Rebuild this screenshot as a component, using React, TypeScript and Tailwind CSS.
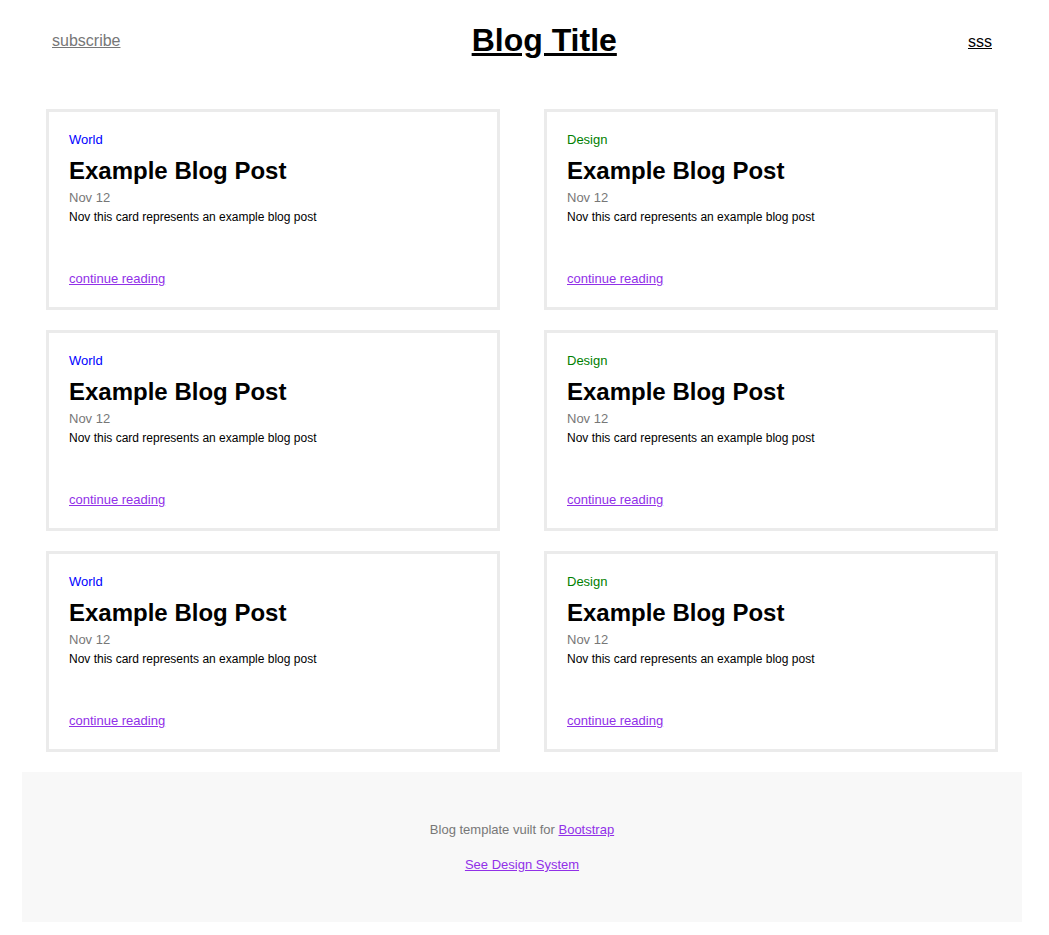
const posts = [
  { tag: 'World', tagColor: 'text-[#0000ff]' },
  { tag: 'Design', tagColor: 'text-[#008000]' },
  { tag: 'World', tagColor: 'text-[#0000ff]' },
  { tag: 'Design', tagColor: 'text-[#008000]' },
  { tag: 'World', tagColor: 'text-[#0000ff]' },
  { tag: 'Design', tagColor: 'text-[#008000]' },
]

function PostCard({ tag, tagColor }: { tag: string; tagColor: string }) {
  return (
    <div className="flex h-[201px] flex-col border-[3px] border-[#ebebeb] bg-white px-5 pb-[21px] pt-5">
      <p className={`text-[13px] leading-[15px] ${tagColor}`}>{tag}</p>
      <h2 className="mt-[10px] text-[24px] font-bold leading-[28px] text-black">Example Blog Post</h2>
      <p className="mt-[5px] text-[13px] leading-[15px] text-[#777]">Nov 12</p>
      <p className="mt-[5px] text-[12px] leading-[14px] text-black">
        Nov this card represents an example blog post
      </p>
      <a href="#" className="mt-auto text-[13px] leading-[15px] text-[#9130e8] underline">
        continue reading
      </a>
    </div>
  )
}

export default function App() {
  return (
    <div className="min-h-screen bg-white font-['Liberation_Sans',Arial,sans-serif]">
      <div className="ml-[22px] w-[1000px]">
        <header className="flex h-[80px] items-center justify-between px-[30px]">
          <a href="#" className="mt-[2px] text-[16px] leading-[18px] text-[#777] underline">
            subscribe
          </a>
          <a href="#" className="text-[32px] font-bold leading-[37px] text-black underline">
            Blog Title
          </a>
          <a href="#" className="mt-[3px] text-[16px] leading-[18px] text-black underline">
            sss
          </a>
        </header>

        <main className="grid grid-cols-2 gap-x-[44px] gap-y-5 px-6 pt-[29px]">
          {posts.map((post, i) => (
            <PostCard key={i} tag={post.tag} tagColor={post.tagColor} />
          ))}
        </main>

        <footer className="mt-5 flex h-[150px] flex-col items-center justify-center gap-5 bg-[#f8f8f8] text-[13px] leading-[15px]">
          <p className="text-[#777]">
            Blog template vuilt for{' '}
            <a href="#" className="text-[#9130e8] underline">
              Bootstrap
            </a>
          </p>
          <a href="#" className="text-[#9130e8] underline">
            See Design System
          </a>
        </footer>
      </div>
    </div>
  )
}
